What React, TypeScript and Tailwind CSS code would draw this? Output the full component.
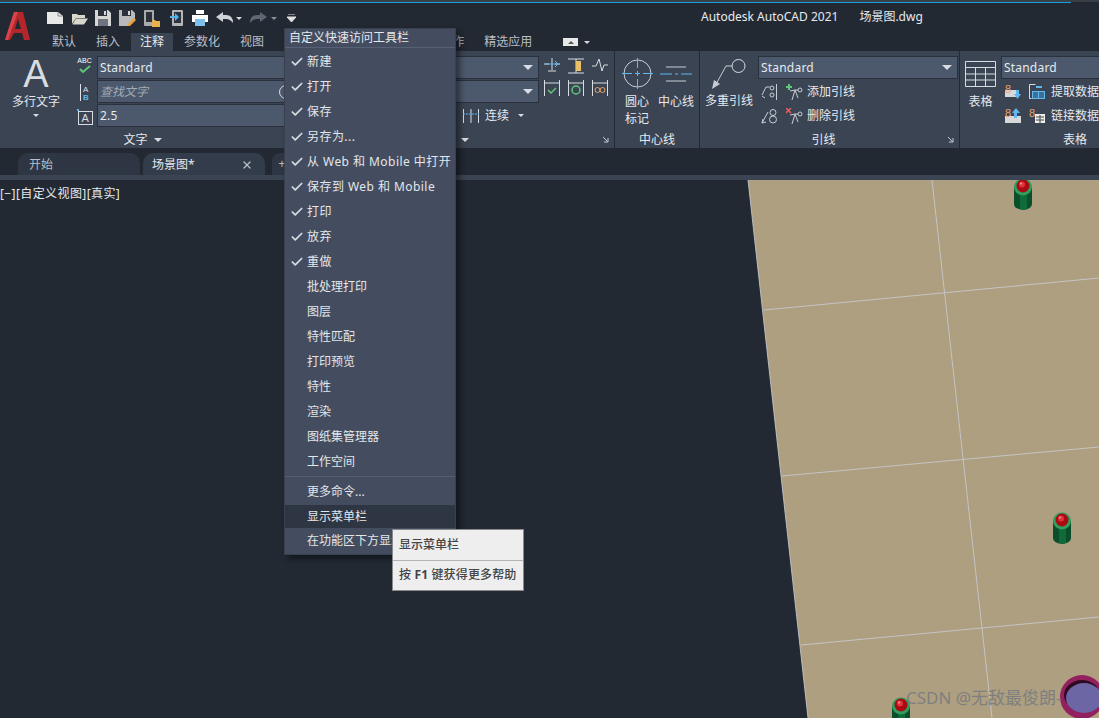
import { Check, X } from 'lucide-react';
import type { ReactNode } from 'react';

const checkedItems = ['新建', '打开', '保存', '另存为...', '从 Web 和 Mobile 中打开', '保存到 Web 和 Mobile', '打印', '放弃', '重做'];
const plainItems = ['批处理打印', '图层', '特性匹配', '打印预览', '特性', '渲染', '图纸集管理器', '工作空间'];
const ribbonTabs = ['默认', '插入', '注释', '参数化', '视图', '管理', '输出', '附加模块', '协作', '精选应用'];

function Icon({ w, h, children, className }: { w: number; h: number; children: ReactNode; className?: string }) {
    return (
        <svg width={w} height={h} viewBox={`0 0 ${w} ${h}`} fill="none" className={`shrink-0 ${className ?? ''}`}>
            {children}
        </svg>
    );
}

function Caret({ className }: { className?: string }) {
    return <span className={`inline-block h-0 w-0 border-x-[4px] border-t-[4px] border-x-transparent border-t-[#d8dce2] ${className ?? ''}`} />;
}

function Combo({ text, italic, caret, className, children }: { text?: string; italic?: boolean; caret?: boolean; className: string; children?: ReactNode }) {
    return (
        <div className={`flex h-[23px] items-center justify-between border border-[#2a313c] bg-[#4c596c] pr-[5px] pl-[2px] ${className}`}>
            <span className={italic ? 'text-[#a4abb6] italic' : 'tracking-[0.2px] text-[#e6e9ee]'}>{text}</span>
            {caret && <span className="h-0 w-0 border-x-[5px] border-t-[5px] border-x-transparent border-t-[#d8dce2]" />}
            {children}
        </div>
    );
}

function PanelLabel({ children, expand, className }: { children: ReactNode; expand?: boolean; className?: string }) {
    return (
        <div className={`relative flex h-[18px] items-center justify-center gap-[6px] pt-[2px] text-[#e6e9ee] ${className ?? ''}`}>
            {children}
            {expand && (
                <Icon w={7} h={7} className="absolute right-[5px] bottom-[5px]">
                    <path d="M1 1l4.5 4.5M6 2v4H2" stroke="#c8cdd5" />
                </Icon>
            )}
        </div>
    );
}

function QuickAccess() {
    return (
        <div className="flex h-[30px] items-center pl-[4px]">
            <Icon w={17} h={14} className="mr-[7px]"><path d="M0 1h11l5 4v8H0z" fill="#e8e8e8" /><path d="M11 1v4h5" stroke="#8a8a8a" /></Icon>
            <Icon w={17} h={14} className="mr-[7px]"><path d="M1 3h5l1 1h7v3H5L1 13zM5 7.5h12L13 13.5H1.5z" fill="#d9d6cc" /></Icon>
            <Icon w={16} h={16} className="mr-[8px]"><path d="M0 0h13l3 3v13H0z" fill="#d6d6d6" /><path d="M3 0h9v6H3z" fill="#2b323d" /><path d="M9 1h2v4H9z" fill="#d6d6d6" /><path d="M3 9h10v7H3z" fill="#6d7480" /></Icon>
            <Icon w={17} h={16} className="mr-[8px]"><path d="M0 0h13l3 3v6l-7 7H0z" fill="#b9b9b9" /><path d="M3 0h9v6H3z" fill="#2b323d" /><path d="M9 1h2v4H9z" fill="#d6d6d6" /><path d="M9 14l6-6 2 2-6 6H9z" fill="#e8a33d" /></Icon>
            <Icon w={17} h={17} className="mr-[9px]"><rect x="0" y="0" width="10" height="16" rx="1" fill="#aaa" /><rect x="2" y="2" width="6" height="10" fill="#2b323d" /><path d="M8 10h3l1 1h4v6H8z" fill="#e9b24a" /></Icon>
            <Icon w={13} h={16} className="mr-[9px]"><rect x="2" y="0" width="11" height="16" rx="1" fill="#b5b5b5" /><rect x="4" y="2" width="7" height="11" fill="#2b323d" /><path d="M0 6h5V3l4 4-4 4V8H0z" fill="#52b2ec" /></Icon>
            <Icon w={16} h={16} className="mr-[8px]"><path d="M4 0h8v4H4z" fill="#fff" /><path d="M0 5h16v7H0z" fill="#fff" /><path d="M3 9h10v7H3z" fill="#7ec0ea" /></Icon>
            <Icon w={17} h={12} className="mr-[3px]"><path d="M0 5l7-5v3h3q7 0 7 8-3-4-7-4H7v3z" fill="#cfd2d6" /></Icon>
            <Caret className="mr-[8px] !border-x-[3px] !border-t-[3px]" />
            <Icon w={17} h={12} className="mr-[4px]"><path d="M17 5l-7-5v3H7q-7 0-7 8 3-4 7-4h3v3z" fill="#5f6671" /></Icon>
            <Caret className="mr-[10px] !border-x-[3px] !border-t-[3px] !border-t-[#8a909a]" />
            <Icon w={9} h={8}><path d="M1 0h7M0 3h9l-4.500 5z" stroke="#e0e0e0" fill="#e0e0e0" strokeWidth="1" /></Icon>
        </div>
    );
}

function TextPanel() {
    return (
        <div className="flex w-[286px] shrink-0 flex-col border-r border-[#222933]">
            <div className="flex h-[79px] pt-[5px]">
                <div className="flex w-[72px] flex-col items-center">
                    <span className="h-[31px] font-['Liberation_Sans',sans-serif] text-[38px] leading-[37px] text-[#d9dce1]">A</span>
                    <span className="mt-[7px] text-[#e6e9ee]">多行文字</span>
                    <Caret className="mt-[4px] !border-x-[3px] !border-t-[3px]" />
                </div>
                <div className="flex w-[25px] flex-col gap-[1px]">
                    <div className="flex h-[24px] flex-col items-center">
                        <span className="font-['Liberation_Sans',sans-serif] text-[7px] leading-[9px] text-white">ABC</span>
                        <Icon w={12} h={9}><path d="M1 4l3 3 7-6" stroke="#5fc977" strokeWidth="2" /></Icon>
                    </div>
                    <div className="flex h-[23px] items-center justify-center">
                        <Icon w={10} h={17}>
                            <path d="M0.5 0v17" stroke="#dfe3e8" />
                            <text x="3" y="7.5" fontSize="8" fill="#dfe3e8" fontFamily="Liberation Sans">A</text>
                            <text x="3" y="16" fontSize="8" fontWeight="bold" fill="#5fb8f0" fontFamily="Liberation Sans">B</text>
                        </Icon>
                    </div>
                    <div className="flex h-[23px] items-center justify-center">
                        <Icon w={16} h={16}>
                            <rect x="1.5" y="2.5" width="14" height="13" stroke="#d8dce2" />
                            <rect x="0" y="0" width="2" height="2" fill="#5fb8f0" />
                            <text x="4.5" y="13" fontSize="11" fill="#d8dce2" fontFamily="Liberation Sans">A</text>
                        </Icon>
                    </div>
                </div>
                <div className="flex flex-1 flex-col gap-[1px]">
                    <Combo text="Standard" className="w-full" />
                    <Combo text="查找文字" italic className="w-full">
                        <span className="-mr-[14px] h-[14px] w-[14px] rounded-full border border-[#d8dce2]" />
                    </Combo>
                    <Combo text="2.5" className="w-full" />
                </div>
            </div>
            <PanelLabel>文字<Caret /></PanelLabel>
        </div>
    );
}

function DimensionPanel() {
    return (
        <div className="flex w-[329px] shrink-0 flex-col border-r border-[#222933]">
            <div className="flex h-[79px] gap-[5px] pt-[5px] pl-[60px]">
                <div className="flex w-[193px] flex-col gap-[1px]">
                    <Combo caret className="w-full" />
                    <Combo caret className="w-full" />
                    <div className="flex h-[23px] items-center justify-end gap-[6px] pr-[15px] text-[#e6e9ee]">
                        <Icon w={16} h={14}><path d="M0.5 0v14M15.5 0v14M8 0v14" stroke="#d8dce2" /><path d="M0 5h16" stroke="#5fb8f0" strokeDasharray="2 1" /></Icon>
                        <span>连续</span>
                        <Caret className="ml-[3px] !border-x-[3px] !border-t-[3px]" />
                    </div>
                </div>
                <div className="grid grid-cols-3 grid-rows-[24px_24px] gap-x-[8px]">
                    <Icon w={16} h={18} className="mt-[2px]"><path d="M8 0v12M0 6h5M11 6h5M4 13h8" stroke="#d8dce2" /><path d="M2 6h12M11 3l3 3-3 3" stroke="#5fb8f0" /></Icon>
                    <Icon w={16} h={16} className="mt-[2px]"><path d="M0 1h16M0 15h16M8 1v14" stroke="#d8dce2" /><rect x="8" y="3" width="5" height="10" fill="#eac067" /></Icon>
                    <Icon w={16} h={16} className="mt-[2px]"><path d="M0 8h4l3-7 3 12 2-6h4" stroke="#d8dce2" /></Icon>
                    <Icon w={16} h={16}><path d="M0.5 0v16M15.5 0v16M0 3h16" stroke="#d8dce2" /><path d="M4 10l3 3 5-5" stroke="#5fc977" strokeWidth="1.5" /></Icon>
                    <Icon w={16} h={16}><path d="M0.5 0v16M15.5 0v16M0 3h16" stroke="#d8dce2" /><circle cx="8" cy="10" r="4" stroke="#5fc977" strokeWidth="1.5" /></Icon>
                    <Icon w={16} h={16}><path d="M0.5 0v16M15.5 0v16M0 3h16" stroke="#d8dce2" /><circle cx="5.5" cy="10" r="2.5" stroke="#e8a36a" /><circle cx="10.5" cy="10" r="2.5" stroke="#e8a36a" /></Icon>
                </div>
            </div>
            <PanelLabel expand>标注<Caret /></PanelLabel>
        </div>
    );
}

function CenterlinePanel() {
    return (
        <div className="flex w-[85px] shrink-0 flex-col border-r border-[#222933]">
            <div className="flex h-[79px] pt-[7px] pl-[6px] text-[#e6e9ee]">
                <div className="flex w-[32px] flex-col items-center">
                    <Icon w={31} h={31}>
                        <circle cx="15.5" cy="15.5" r="13.5" stroke="#c8cdd5" />
                        <path d="M15.5 0v10M15.5 13v5M15.5 21v10M0 15.5h10M13 15.5h5M21 15.5h10" stroke="#5fb8f0" />
                    </Icon>
                    <span className="mt-[4px] text-center leading-[17px]">圆心<br />标记</span>
                </div>
                <div className="ml-[5px] flex w-[36px] flex-col items-center">
                    <Icon w={32} h={31}>
                        <path d="M6 9h20M6 23h20" stroke="#c8cdd5" />
                        <path d="M0 16h12M15 16h3M21 16h11" stroke="#5fb8f0" />
                    </Icon>
                    <span className="mt-[4px] leading-[17px]">中心线</span>
                </div>
            </div>
            <PanelLabel>中心线</PanelLabel>
        </div>
    );
}

function LeaderPanel() {
    return (
        <div className="flex w-[260px] shrink-0 flex-col border-r border-[#222933]">
            <div className="flex h-[79px] pt-[5px] text-[#e6e9ee]">
                <div className="flex w-[58px] flex-col items-center pt-[3px]">
                    <Icon w={34} h={30}>
                        <circle cx="26.5" cy="7" r="6.500" stroke="#d8dce2" />
                        <path d="M20 7h-6L3 27" stroke="#c8cdd5" />
                        <path d="M0 30l2-9 6 4z" fill="#c8cdd5" />
                    </Icon>
                    <span className="mt-[4px]">多重引线</span>
                </div>
                <div className="flex flex-1 flex-col gap-[1px]">
                    <Combo text="Standard" caret className="w-[200px]" />
                    <div className="flex h-[23px] items-center pl-[3px]">
                        <Icon w={17} h={16} className="mr-[8px]"><circle cx="11" cy="4" r="2" stroke="#c8cdd5" /><circle cx="11" cy="11" r="2" stroke="#c8cdd5" /><path d="M8.500 3H5L1 11M15.500 0v16" stroke="#c8cdd5" /><path d="M1 12l3 2" stroke="#c8cdd5" /></Icon>
                        <Icon w={17} h={16} className="mr-[4px]"><path d="M0 3h6M3 0v6" stroke="#5fc977" strokeWidth="2" /><circle cx="14" cy="6" r="2" stroke="#c8cdd5" /><path d="M12 6H9L6 16M9 6L4 7M9 6l3 8" stroke="#c8cdd5" /></Icon>
                        <span>添加引线</span>
                    </div>
                    <div className="flex h-[23px] items-center pl-[3px]">
                        <Icon w={17} h={16} className="mr-[8px]"><circle cx="12" cy="4.500" r="3" stroke="#c8cdd5" /><circle cx="12" cy="11.500" r="3.500" stroke="#c8cdd5" /><path d="M7 4L1 15M1 15l1-4M1 15l4-1" stroke="#c8cdd5" /></Icon>
                        <Icon w={17} h={16} className="mr-[4px]"><path d="M0 0l5 5M5 0L0 5" stroke="#e05b5b" strokeWidth="1.6" /><circle cx="14" cy="6" r="2" stroke="#c8cdd5" /><path d="M12 6H9L6 16M9 6L4 7M9 6l3 8" stroke="#c8cdd5" /></Icon>
                        <span>删除引线</span>
                    </div>
                </div>
            </div>
            <PanelLabel expand className="pr-[12px]">引线</PanelLabel>
        </div>
    );
}

function TablePanel() {
    return (
        <div className="flex w-[230px] shrink-0 flex-col">
            <div className="flex h-[79px] pt-[5px] text-[#e6e9ee]">
                <div className="flex w-[41px] shrink-0 flex-col items-center pt-[5px]">
                    <Icon w={31} h={26}>
                        <path d="M0.500 0.500h30v25h-30zM0.500 6.500h30M0.500 13h30M0.500 19h30M10.500 6.500v19M20.500 6.500v19" stroke="#d8dce2" />
                    </Icon>
                    <span className="mt-[7px]">表格</span>
                </div>
                <div className="flex flex-1 flex-col gap-[1px]">
                    <Combo text="Standard" className="w-full" />
                    <div className="flex h-[23px] items-center whitespace-nowrap pl-[4px]">
                        <Icon w={16} h={15} className="mr-[8px]"><path d="M0 6h12v7H0z" fill="#d8d8d8" /><text x="0" y="9" fontSize="11" fill="#e8a36a" fontFamily="Liberation Sans">8</text><path d="M11 6h3v4h2l-3.500 5L9 10h2z" fill="#5fb8f0" /></Icon>
                        <Icon w={16} h={15} className="mr-[6px]"><path d="M0.500 0.500v14M0.500 0.500h6M0.500 14.500h2" stroke="#d8dce2" /><rect x="3.500" y="7.500" width="12" height="7" fill="#3e6f96" stroke="#5fb8f0" /><path d="M9.500 7.500v7" stroke="#5fb8f0" /><path d="M7 3h6" stroke="#5fb8f0" strokeWidth="2" /></Icon>
                        <span>提取数据</span>
                    </div>
                    <div className="flex h-[23px] items-center whitespace-nowrap pl-[4px]">
                        <Icon w={16} h={15} className="mr-[8px]"><path d="M0 8h16v7H0z" fill="#d8d8d8" /><text x="0" y="9" fontSize="11" fill="#e8a36a" fontFamily="Liberation Sans">8</text><path d="M9 10h3V5h3l-4-5-4 5h2z" fill="#5fb8f0" /></Icon>
                        <Icon w={16} h={15} className="mr-[6px]"><text x="0" y="9" fontSize="11" fill="#e8a36a" fontFamily="Liberation Sans">8</text><path d="M6 6h10v9H6z" fill="#eeeeee" /><path d="M7 9h8M7 12h8M11 7v8" stroke="#444" /></Icon>
                        <span>链接数据</span>
                    </div>
                </div>
            </div>
            <PanelLabel>表格</PanelLabel>
        </div>
    );
}

function Pawn({ x, y }: { x: number; y: number }) {
    return (
        <g transform={`translate(${x} ${y})`}>
            <path d="M-9 0v17q0 5 9 6 9-1 9-6V0z" fill="#0b4f2a" />
            <path d="M-3 2h7v20l-4 1-3-1z" fill="#0f6b3a" />
            <ellipse cx="0" cy="0" rx="9" ry="8.500" fill="#2f9e5f" />
            <circle cx="0" cy="-1" r="6.500" fill="#a90b12" />
            <circle cx="-1" cy="-2.500" r="3" fill="#e0343c" />
            <circle cx="-2" cy="-3.500" r="1" fill="#f59a9e" />
        </g>
    );
}

function Scene() {
    return (
        <svg viewBox="0 0 1099 538" className="absolute inset-0 h-full w-full">
            <path d="M748 0H1099V538H808z" fill="#ae9f80" />
            <path d="M748 0L808 538" stroke="#c9ced6" strokeWidth="1" opacity="0.8" />
            <path d="M932 0L992 538M764 130L1099 98M782 296L1099 267M801 465L1099 437" stroke="#c8ccd2" strokeWidth="1" opacity="0.85" />
            <Pawn x={1023} y={7} />
            <Pawn x={1062} y={341} />
            <Pawn x={901} y={526} />
            <circle cx="1082" cy="517" r="22" fill="#93205f" />
            <ellipse cx="1082" cy="515" rx="18" ry="15" fill="#2f0a22" />
            <ellipse cx="1084" cy="518" rx="18" ry="15" fill="#6c66a4" />
        </svg>
    );
}

function CustomizeMenu() {
    return (
        <div className="absolute top-[28px] left-[284px] z-10 flex h-[527px] w-[172px] flex-col border border-[#39414f] bg-[#434d5f] text-[#e3e6ea] shadow-[4px_4px_6px_rgba(0,0,0,0.45)]">
            <div className="flex h-[19px] shrink-0 items-center border-b border-[#566175] pl-[4px] text-[#e6e9ee]">自定义快速访问工具栏</div>
            <div className="h-[1px] shrink-0" />
            {checkedItems.map((item) => (
                <div key={item} className="flex h-[25px] shrink-0 items-center whitespace-nowrap">
                    <Check size={14} strokeWidth={3} className="ml-[5px] w-[14px] text-[#d8dce2]" />
                    <span className="ml-[3px] tracking-[0.45px]">{item}</span>
                </div>
            ))}
            {plainItems.map((item) => (
                <div key={item} className="flex h-[25px] shrink-0 items-center pl-[22px]">{item}</div>
            ))}
            <div className="my-[2px] h-[1px] shrink-0 bg-[#525d70]" />
            <div className="flex h-[25px] shrink-0 items-center pl-[22px]">更多命令...</div>
            <div className="mt-[1px] flex h-[23px] shrink-0 items-center bg-[#2e3644] pl-[22px]">显示菜单栏</div>
            <div className="flex flex-1 items-center pl-[22px]">在功能区下方显示</div>
        </div>
    );
}

function MenuTooltip() {
    return (
        <div className="absolute top-[529px] left-[392px] z-20 flex h-[62px] w-[132px] flex-col border border-[#8a8a8a] bg-[#eeeeee] pl-[6px] font-medium text-[#444444]">
            <div className="flex h-[30px] items-center">显示菜单栏</div>
            <div className="-ml-[6px] h-[1px] bg-[#b4b4b4]" />
            <div className="flex h-[30px] items-center whitespace-nowrap tracking-[0.15px]">按&nbsp;<b>F1</b>&nbsp;键获得更多帮助</div>
        </div>
    );
}

export default function App() {
    return (
        <div className="relative flex h-[718px] w-[1099px] flex-col overflow-hidden bg-[#222933] font-['Noto_Sans','Noto_Sans_CJK_SC',sans-serif] text-[12px] leading-[16px]">
            {/* Title bar and ribbon tabs */}
            <div className="h-[2px] shrink-0 bg-[#3a3f46]" />
            <div className="h-[1px] w-[1071px] shrink-0 bg-[#1a9fe0]" />
            <div className="flex h-[48px] shrink-0">
                <div className="w-[43px] shrink-0 pt-[9px] pl-[5px]">
                    <Icon w={26} h={30}>
                        <path d="M9 0h9l7 28h-6l-2-7H9l-4 7H0z" fill="#b3262b" />
                        <path d="M13 7l-3 10h6z" fill="#222933" />
                        <path d="M9 0h4L3 28H0z" fill="#d9434a" />
                    </Icon>
                </div>
                <div className="relative flex-1">
                    <QuickAccess />
                    <div className="flex h-[18px] gap-[2px] text-[#b9bec7]">
                        {ribbonTabs.map((tab) => (
                            <div key={tab} className={tab === '注释' ? 'flex items-center bg-[#3b4453] px-[9px] text-[#e6e9ee]' : 'flex items-center px-[9px]'}>
                                {tab}
                            </div>
                        ))}
                        <div className="ml-[20px] flex items-center gap-[6px]">
                            <div className="flex h-[8px] w-[15px] items-center justify-center bg-[#e8e8e8]">
                                <span className="h-0 w-0 border-x-[3px] border-b-[3px] border-x-transparent border-b-[#555]" />
                            </div>
                            <Caret className="!border-x-[3px] !border-t-[3px]" />
                        </div>
                    </div>
                    <div className="absolute top-[6px] left-[658px] flex gap-[21px] whitespace-nowrap text-[#e6e9ee]">
                        <span>Autodesk AutoCAD 2021</span>
                        <span>场景图.dwg</span>
                    </div>
                </div>
            </div>

            {/* Ribbon */}
            <div className="flex h-[97px] shrink-0 bg-[#3b4453]">
                <TextPanel />
                <DimensionPanel />
                <CenterlinePanel />
                <LeaderPanel />
                <TablePanel />
            </div>

            {/* Document tabs */}
            <div className="mt-[4px] flex h-[23px] shrink-0 items-end gap-[3px] pl-[18px]">
                <div className="flex h-[22px] w-[122px] items-center rounded-t-[10px] bg-[#2e3644] pt-[1px] pl-[11px] text-[#b9bec7]">开始</div>
                <div className="flex h-[22px] w-[122px] items-center justify-between rounded-t-[10px] bg-[#333c4a] pt-[1px] pr-[12px] pl-[9px] text-[#e6e9ee]">
                    场景图*
                    <X size={12} strokeWidth={2.5} className="text-[#b9bec7]" />
                </div>
                <div className="ml-[4px] flex h-[22px] w-[20px] items-center justify-center rounded-t-[8px] bg-[#2e3644] text-[#b9bec7]">+</div>
            </div>
            <div className="h-[5px] shrink-0 bg-[#3b4453]" />

            {/* Drawing area */}
            <div className="relative flex-1">
                <Scene />
                <span className="absolute top-[6px] left-0 whitespace-nowrap tracking-[0.4px] text-[#e6e9ee]">[−][自定义视图][真实]</span>
                <span className="absolute top-[506px] left-[906px] whitespace-nowrap text-[17px] leading-[24px] text-[#7f7f7f]">CSDN @无敌最俊朗-</span>
            </div>

            <CustomizeMenu />
            <MenuTooltip />
        </div>
    );
}
